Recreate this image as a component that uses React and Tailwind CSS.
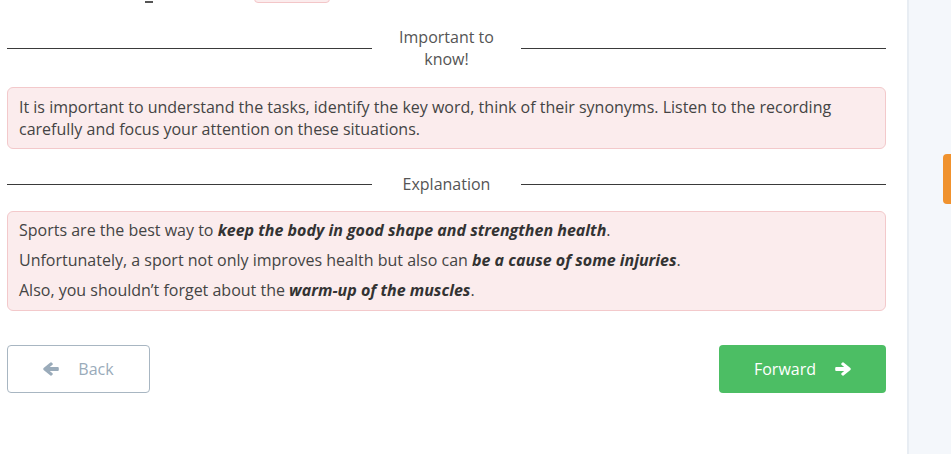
const Divider = ({ children }) => (
  <div className="flex items-center">
    <div className="flex-1 h-px bg-[#3a3a3a]" />
    <div className="w-[149px] text-center text-[16px] leading-[22px] text-[#555]">
      {children}
    </div>
    <div className="flex-1 h-px bg-[#3a3a3a]" />
  </div>
);

// chunky solid arrow, pointing right
const Arrow = ({ left }) => (
  <svg
    viewBox="0 0 16 14"
    className={`w-[16px] h-[14px] ${left ? "rotate-180" : ""}`}
    fill="currentColor"
  >
    <path d="M8.6 0.6 L15.4 6.1 Q16.1 7 15.4 7.9 L8.6 13.4 Q7.8 14 7.1 13.3 L6.4 12.6 Q5.8 11.9 6.5 11.2 L9.2 8.9 L1.2 8.9 Q0.2 8.9 0.2 7.9 L0.2 6.1 Q0.2 5.1 1.2 5.1 L9.2 5.1 L6.5 2.8 Q5.8 2.1 6.4 1.4 L7.1 0.7 Q7.8 0 8.6 0.6 Z" />
  </svg>
);

const App = () => {
  return (
    <div
      className="w-[951px] h-[454px] flex bg-white overflow-hidden"
      style={{ fontFamily: "'Open Sans', sans-serif" }}
    >
      {/* Main column */}
      <div className="w-[907px] pl-[7px] pr-[21px]">
        {/* Cut-off row above */}
        <div className="h-[3px] overflow-hidden flex items-end">
          <div className="ml-[138px] w-[8px] h-[2px] bg-[#555]" />
          <div className="ml-[101px] w-[76px] h-[10px] rounded-b-[4px] border border-[#f3c6c8] bg-[#fbeced]" />
        </div>

        <div className="mt-[23px]">
          <Divider>
            Important to
            <br />
            know!
          </Divider>
        </div>

        <div className="mt-[17px] h-[62px] rounded-[6px] border border-[#f3c9cb] bg-[#fbeced] px-[11px] pt-[8px] text-[16px] leading-[22px] text-[#444]">
          It is important to understand the tasks, identify the key word, think of their synonyms. Listen to the recording carefully and focus your attention on these situations.
        </div>

        <div className="mt-[24px]">
          <Divider>Explanation</Divider>
        </div>

        <div className="mt-[16px] h-[100px] rounded-[6px] border border-[#f3c9cb] bg-[#fbeced] px-[11px] pt-[7px] text-[16px] leading-[22px] text-[#444] flex flex-col gap-[8px]">
          <p>
            Sports are the best way to{" "}
            <b className="italic font-bold text-[#333]">keep the body in good shape and strengthen health</b>.
          </p>
          <p>
            Unfortunately, a sport not only improves health but also can{" "}
            <b className="italic font-bold text-[#333]">be a cause of some injuries</b>.
          </p>
          <p>
            Also, you shouldn’t forget about the{" "}
            <b className="italic font-bold text-[#333]">warm-up of the muscles</b>.
          </p>
        </div>

        <div className="mt-[34px] flex justify-between">
          <button className="w-[143px] h-[48px] rounded-[4px] border border-[#a8b6c2] bg-white flex items-center justify-center gap-[19px] text-[16px] text-[#9aabba]">
            <Arrow left />
            <span>Back</span>
          </button>
          <button className="w-[167px] h-[48px] rounded-[4px] bg-[#4cbe64] flex items-center justify-center gap-[19px] text-[16px] text-white">
            <span>Forward</span>
            <Arrow />
          </button>
        </div>
      </div>

      {/* Side panel */}
      <div className="flex-1 bg-[#f4f7fb] border-l-2 border-[#e8edf3] flex justify-end">
        <div className="mt-[154px] w-[8px] h-[50px] rounded-l-[4px] bg-[#f0922e]" />
      </div>
    </div>
  );
};

export default App;
